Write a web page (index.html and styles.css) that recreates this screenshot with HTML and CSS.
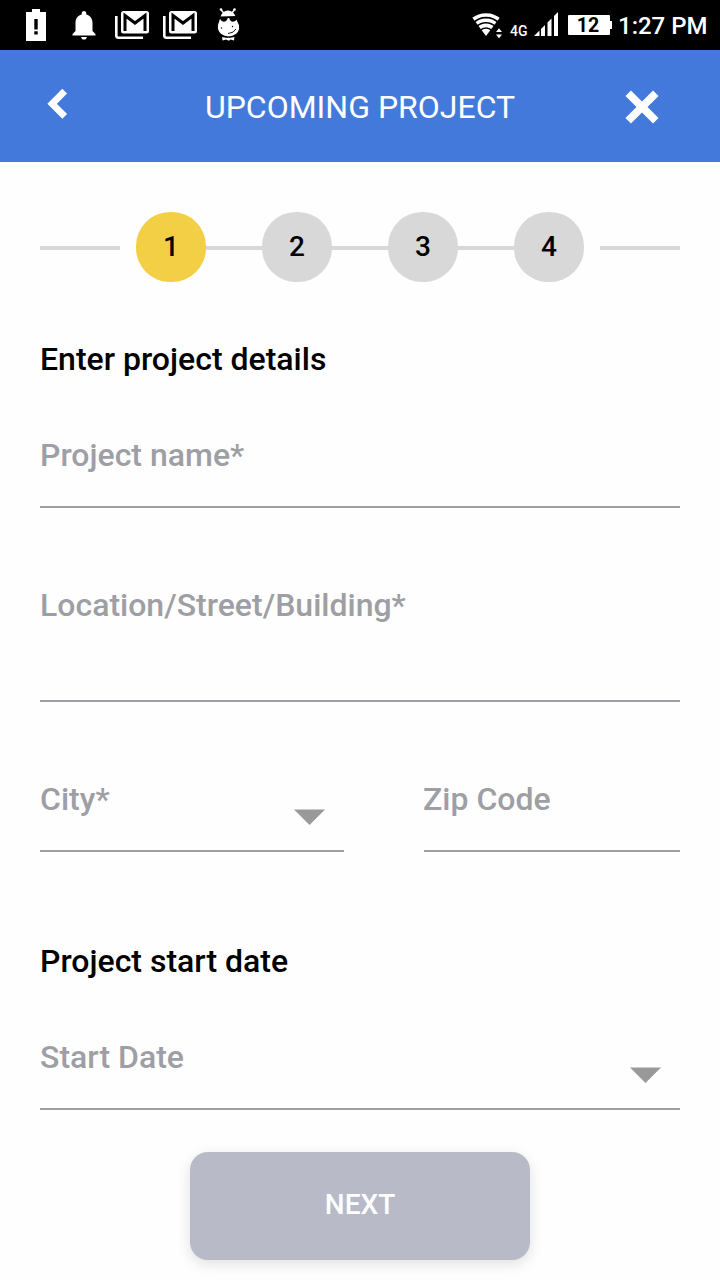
FILE: index.html
```html
<!DOCTYPE html>
<html lang="en">
<head>
<meta charset="utf-8">
<title>Upcoming Project</title>
<link rel="stylesheet" href="styles.css">
</head>
<body>
<div class="status">
  <div class="status-group notifications">
    <svg width="20" height="32" viewBox="0 0 20 32"><path fill="#fff" d="M6 0h8v3h6v29H0V3h6z"/><path d="M8.300 10h3.400v10.500H8.300zM8.300 22.300h3.400v3.200H8.300z"/></svg>
    <svg class="bell" width="24" height="30" viewBox="0 0 24 30"><path fill="#fff" d="M12 1c1.500 0 2.300 1 2.300 2.500v1C18.500 5.500 20.500 9 20.500 13v8l3 3v1.500H.500V24l3-3v-8c0-4 2-7.500 6.200-8.500v-1C9.700 2 10.500 1 12 1zM9.200 27h5.600c0 1.700-1.200 2.600-2.800 2.600S9.200 28.700 9.200 27z"/></svg>
    <svg class="mail" width="34" height="28" viewBox="0 0 34 28"><path fill="none" stroke="#fff" stroke-width="2.600" d="M1.300 5v19.500q0 2.200 2.200 2.200H28"/><rect x="6" width="28" height="22.500" rx="2.500" fill="#fff"/><path fill="none" stroke="#000" stroke-width="3" d="M10 20V4.500l10 7.500 10-7.500V20"/></svg>
    <svg class="mail" width="34" height="28" viewBox="0 0 34 28"><path fill="none" stroke="#fff" stroke-width="2.600" d="M1.300 5v19.500q0 2.200 2.200 2.200H28"/><rect x="6" width="28" height="22.500" rx="2.500" fill="#fff"/><path fill="none" stroke="#000" stroke-width="3" d="M10 20V4.500l10 7.500 10-7.500V20"/></svg>
    <svg class="hippo" width="23" height="34" viewBox="0 0 23 34"><g fill="#fff"><circle cx="4" cy="1.500" r="1.300"/><circle cx="17.500" cy="1.500" r="1.300"/><path d="M3.500 9Q5 3 11 2.500 16.500 3 18.500 8.500L20.500 14q2.300 3 1.600 7-1.800 7-10.600 7.500Q3 28 1 21q-.800-4 1-7z"/><path d="M5 28.500l4.500 1L11 29l2 .600 4.500-1L17 32.500l-3.500-1-1.500 1.200-3-1.200-3.500 1z"/></g><path d="M4.200 2l3 3.500M17.300 2l-2.800 3.500" stroke="#fff" stroke-width="1.500"/><path d="M2.500 8.500L20.500 8v1.800q-1 3.700-4.500 3.900-3-.2-3.800-3.700h-1.400Q9.800 13.700 6.800 13.700 3.300 13.500 2.500 8.500z"/><g><circle cx="4.500" cy="20" r=".7"/><circle cx="15.500" cy="18.500" r=".7"/></g><path fill="none" stroke="#000" stroke-width=".9" d="M11 25.500q6-.5 8-4.500"/><path fill="none" stroke="#000" d="M5 28.700q6.500 1.500 13-.2"/></svg>
  </div>
  <div class="status-group">
    <svg width="32" height="28" viewBox="0 0 32 28"><defs><clipPath id="fan"><path d="M14 24L-1 4Q14-6 29 4z"/></clipPath></defs><g clip-path="url(#fan)" fill="none" stroke="#fff" stroke-width="3.600"><circle cx="14" cy="24" r="21"/><circle cx="14" cy="24" r="15.800"/><circle cx="14" cy="24" r="10.600"/><circle cx="14" cy="24" r="3.600" stroke-width="7.200"/></g><path d="M23.500 14H32v14h-8.500z" fill="#000"/><path fill="#fff" d="M24 20l3-3.800 3 3.800zM24 22.500h6L27 26.300z"/></svg>
    <span class="network">4G</span>
    <svg class="signal" width="24" height="24" viewBox="0 0 24 24"><path fill="#fff" d="M0 24l5.500-5.500V24zM7 24v-7l4-4v11zM13.500 24V10.500l4-4V24zM20 24V4l4-4v24z"/></svg>
    <span class="battery">12</span>
    <span class="nub"></span>
    <span class="clock">1:27 PM</span>
  </div>
</div>
<header class="header">
  <svg class="back" width="21" height="32" viewBox="0 0 21 32"><path fill="none" stroke="#fff" stroke-width="6.700" d="M17.700 3.200L5.100 15.800l12.600 12.600"/></svg>
  <h1 class="title">UPCOMING PROJECT</h1>
  <svg class="close" width="34" height="34" viewBox="0 0 34 34"><path stroke="#fff" stroke-width="7.800" d="M3.200 3.200l27.600 27.600M30.800 3.200L3.200 30.800"/></svg>
</header>
<main class="form">
  <div class="stepper">
    <span class="edge"></span>
    <div class="steps">
      <span class="step active">1</span><span class="link"></span>
      <span class="step">2</span><span class="link"></span>
      <span class="step">3</span><span class="link"></span>
      <span class="step">4</span>
    </div>
    <span class="edge"></span>
  </div>
  <h2 class="heading">Enter project details</h2>
  <div class="field name"><span>Project name*</span></div>
  <div class="field location"><span>Location/Street/Building*</span></div>
  <div class="row">
    <div class="field city"><span>City*</span><svg class="arrow" width="32" height="16" viewBox="0 0 32 16"><path fill="#999" d="M0 .500h31L15.500 16z"/></svg></div>
    <div class="field zip"><span>Zip Code</span></div>
  </div>
  <h2 class="heading dates">Project start date</h2>
  <div class="field start"><span>Start Date</span><svg class="arrow" width="32" height="16" viewBox="0 0 32 16"><path fill="#999" d="M0 .500h31L15.500 16z"/></svg></div>
  <button class="next">NEXT</button>
</main>
</body>
</html>
```
FILE: styles.css
```css
* { box-sizing: border-box; }
body {
  margin: 0;
  height: 1280px;
  overflow: hidden;
  background: #fefefe;
  font-family: Roboto, "Liberation Sans", sans-serif;
  color: #000;
}
svg { display: block; flex: none; }
.status {
  height: 50px;
  padding: 0 12px 0 26px;
  background: #000;
  color: #fff;
  display: flex;
  justify-content: space-between;
}
.status-group { display: flex; align-items: flex-start; padding-top: 12px; }
.notifications { padding-top: 9px; }
.bell { margin: 1px 0 0 26px; }
.mail { margin: 2px 0 0 19px; }
.mail + .mail { margin-left: 14px; }
.hippo { margin: -1px 0 0 20px; }
.network { width: 18px; margin: 12px 6px 0 6px; font-size: 14px; line-height: 14px; font-weight: 500; }
.battery {
  width: 42px;
  height: 20px;
  margin: 3px 0 0 10px;
  padding-right: 2px;
  border-radius: 1px;
  background: #fff;
  color: #000;
  font-size: 19.500px;
  line-height: 21px;
  font-weight: 700;
  text-align: center;
}
.nub { width: 2px; height: 8px; margin-top: 9px; background: #fff; }
.clock { margin-left: 6px; width: 90px; font-size: 24px; line-height: 28px; font-weight: 500; white-space: nowrap; }
.header {
  height: 112px;
  padding: 0 61px 0 47px;
  background: #4279db;
  color: #fff;
  display: grid;
  grid-template-columns: 34px 1fr 34px;
  align-items: center;
}
.back { margin-bottom: 4px; }
.title { margin: 2px 0 0 14px; font-size: 32px; line-height: 38px; font-weight: 400; text-align: center; }
.close { margin-top: 2px; }
.form { padding: 50px 40px 0; display: flex; flex-direction: column; }
.stepper { display: flex; align-items: center; justify-content: space-between; height: 70px; }
.edge { width: 80px; height: 4px; margin-top: 2px; background: #d8d8d8; }
.steps { display: flex; align-items: center; }
.step {
  width: 70px;
  height: 70px;
  border-radius: 34px;
  background: #d8d8d8;
  font-size: 28px;
  line-height: 70px;
  font-weight: 500;
  text-align: center;
}
.active { background: #f3cf45; }
.link { width: 56px; height: 4px; margin-top: 2px; background: #d8d8d8; }
.heading { margin: 58px 0 0; font-size: 32px; line-height: 38px; font-weight: 500; }
.field {
  display: flex;
  justify-content: space-between;
  border-bottom: 2px solid #9e9ea5;
  color: #9e9ea5;
  font-size: 32px;
  line-height: 38px;
  font-weight: 500;
}
.name { height: 72px; margin-top: 58px; }
.location { height: 116px; margin-top: 78px; }
.row { display: flex; justify-content: space-between; margin-top: 78px; }
.city { width: 304px; height: 72px; }
.zip { width: 256px; height: 72px; }
.zip span { margin-left: -1px; }
.dates { margin-top: 90px; }
.start { height: 72px; margin-top: 58px; }
.arrow { margin: 29px 18px 0 0; }
.next {
  width: 340px;
  height: 108px;
  margin: 42px auto 0;
  padding: 0 0 3px;
  border: 0;
  border-radius: 18px;
  background: #b8bac7;
  box-shadow: 0 4px 14px rgba(0, 0, 0, .12);
  color: #fff;
  font: 500 28px/34px Roboto, "Liberation Sans", sans-serif;
}
```
